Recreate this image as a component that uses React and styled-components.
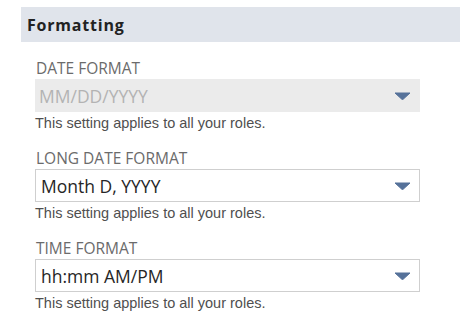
import React from 'react';
import styled, {createGlobalStyle} from 'styled-components';

const GlobalStyle = createGlobalStyle`
body {
	margin: 0;
	background: #fff;
}
`;

const Page = styled.div`
padding: 7px 0 0 21px;
`;

const SectionHeader = styled.div`
height: 35px;
display: flex;
align-items: center;
padding-left: 6px;
background: #e0e4eb;
font-family: "Open Sans", sans-serif;
font-weight: 700;
font-size: 16px;
letter-spacing: 0.8px;
color: #222;
`;

const Fields = styled.div`
display: flex;
flex-direction: column;
gap: 17px;
padding: 17px 0 0 14px;
`;

const Field = styled.div`
width: 385px;
`;

const Label = styled.div`
font-family: "Open Sans", sans-serif;
font-size: 15.5px;
line-height: 18px;
color: #6b6b6b;
margin-bottom: 2px;
padding-left: 1px;
`;

const Select = styled.div`
height: 33px;
box-sizing: border-box;
display: flex;
align-items: center;
justify-content: space-between;
padding: 0 8px 0 ${({disabled}) => disabled ? 3 : 5}px;
border: 1px solid ${({disabled}) => disabled ? '#ebebeb' : '#cfcfcf'};
background: ${({disabled}) => disabled ? '#ebebeb' : '#fff'};
font-family: "Open Sans", sans-serif;
font-size: 17.5px;
color: ${({disabled}) => disabled ? '#b3b3b3' : '#262626'};
`;

const Hint = styled.div`
font-family: "Liberation Sans", Arial, sans-serif;
font-size: 14.5px;
line-height: 17px;
color: #4f4f4f;
margin-top: 3px;
`;

const Arrow = () => <svg width="17" height="8" viewBox="0 0 17 8">
	<path d="M1 1 L16 1 L9.2 7.2 Q8.5 7.8 7.8 7.2 Z" fill="#56729a" stroke="#56729a" strokeWidth="1" strokeLinejoin="round" />
</svg>;

const fields = [
	{label: 'DATE FORMAT', value: 'MM/DD/YYYY', disabled: true},
	{label: 'LONG DATE FORMAT', value: 'Month D, YYYY'},
	{label: 'TIME FORMAT', value: 'hh:mm AM/PM'},
];

export default function App() {
	return <Page>
		<GlobalStyle />
		<SectionHeader>Formatting</SectionHeader>
		<Fields>
			{fields.map(f => <Field key={f.label}>
				<Label>{f.label}</Label>
				<Select disabled={f.disabled}>
					<span>{f.value}</span>
					<Arrow />
				</Select>
				<Hint>This setting applies to all your roles.</Hint>
			</Field>)}
		</Fields>
	</Page>;
}
